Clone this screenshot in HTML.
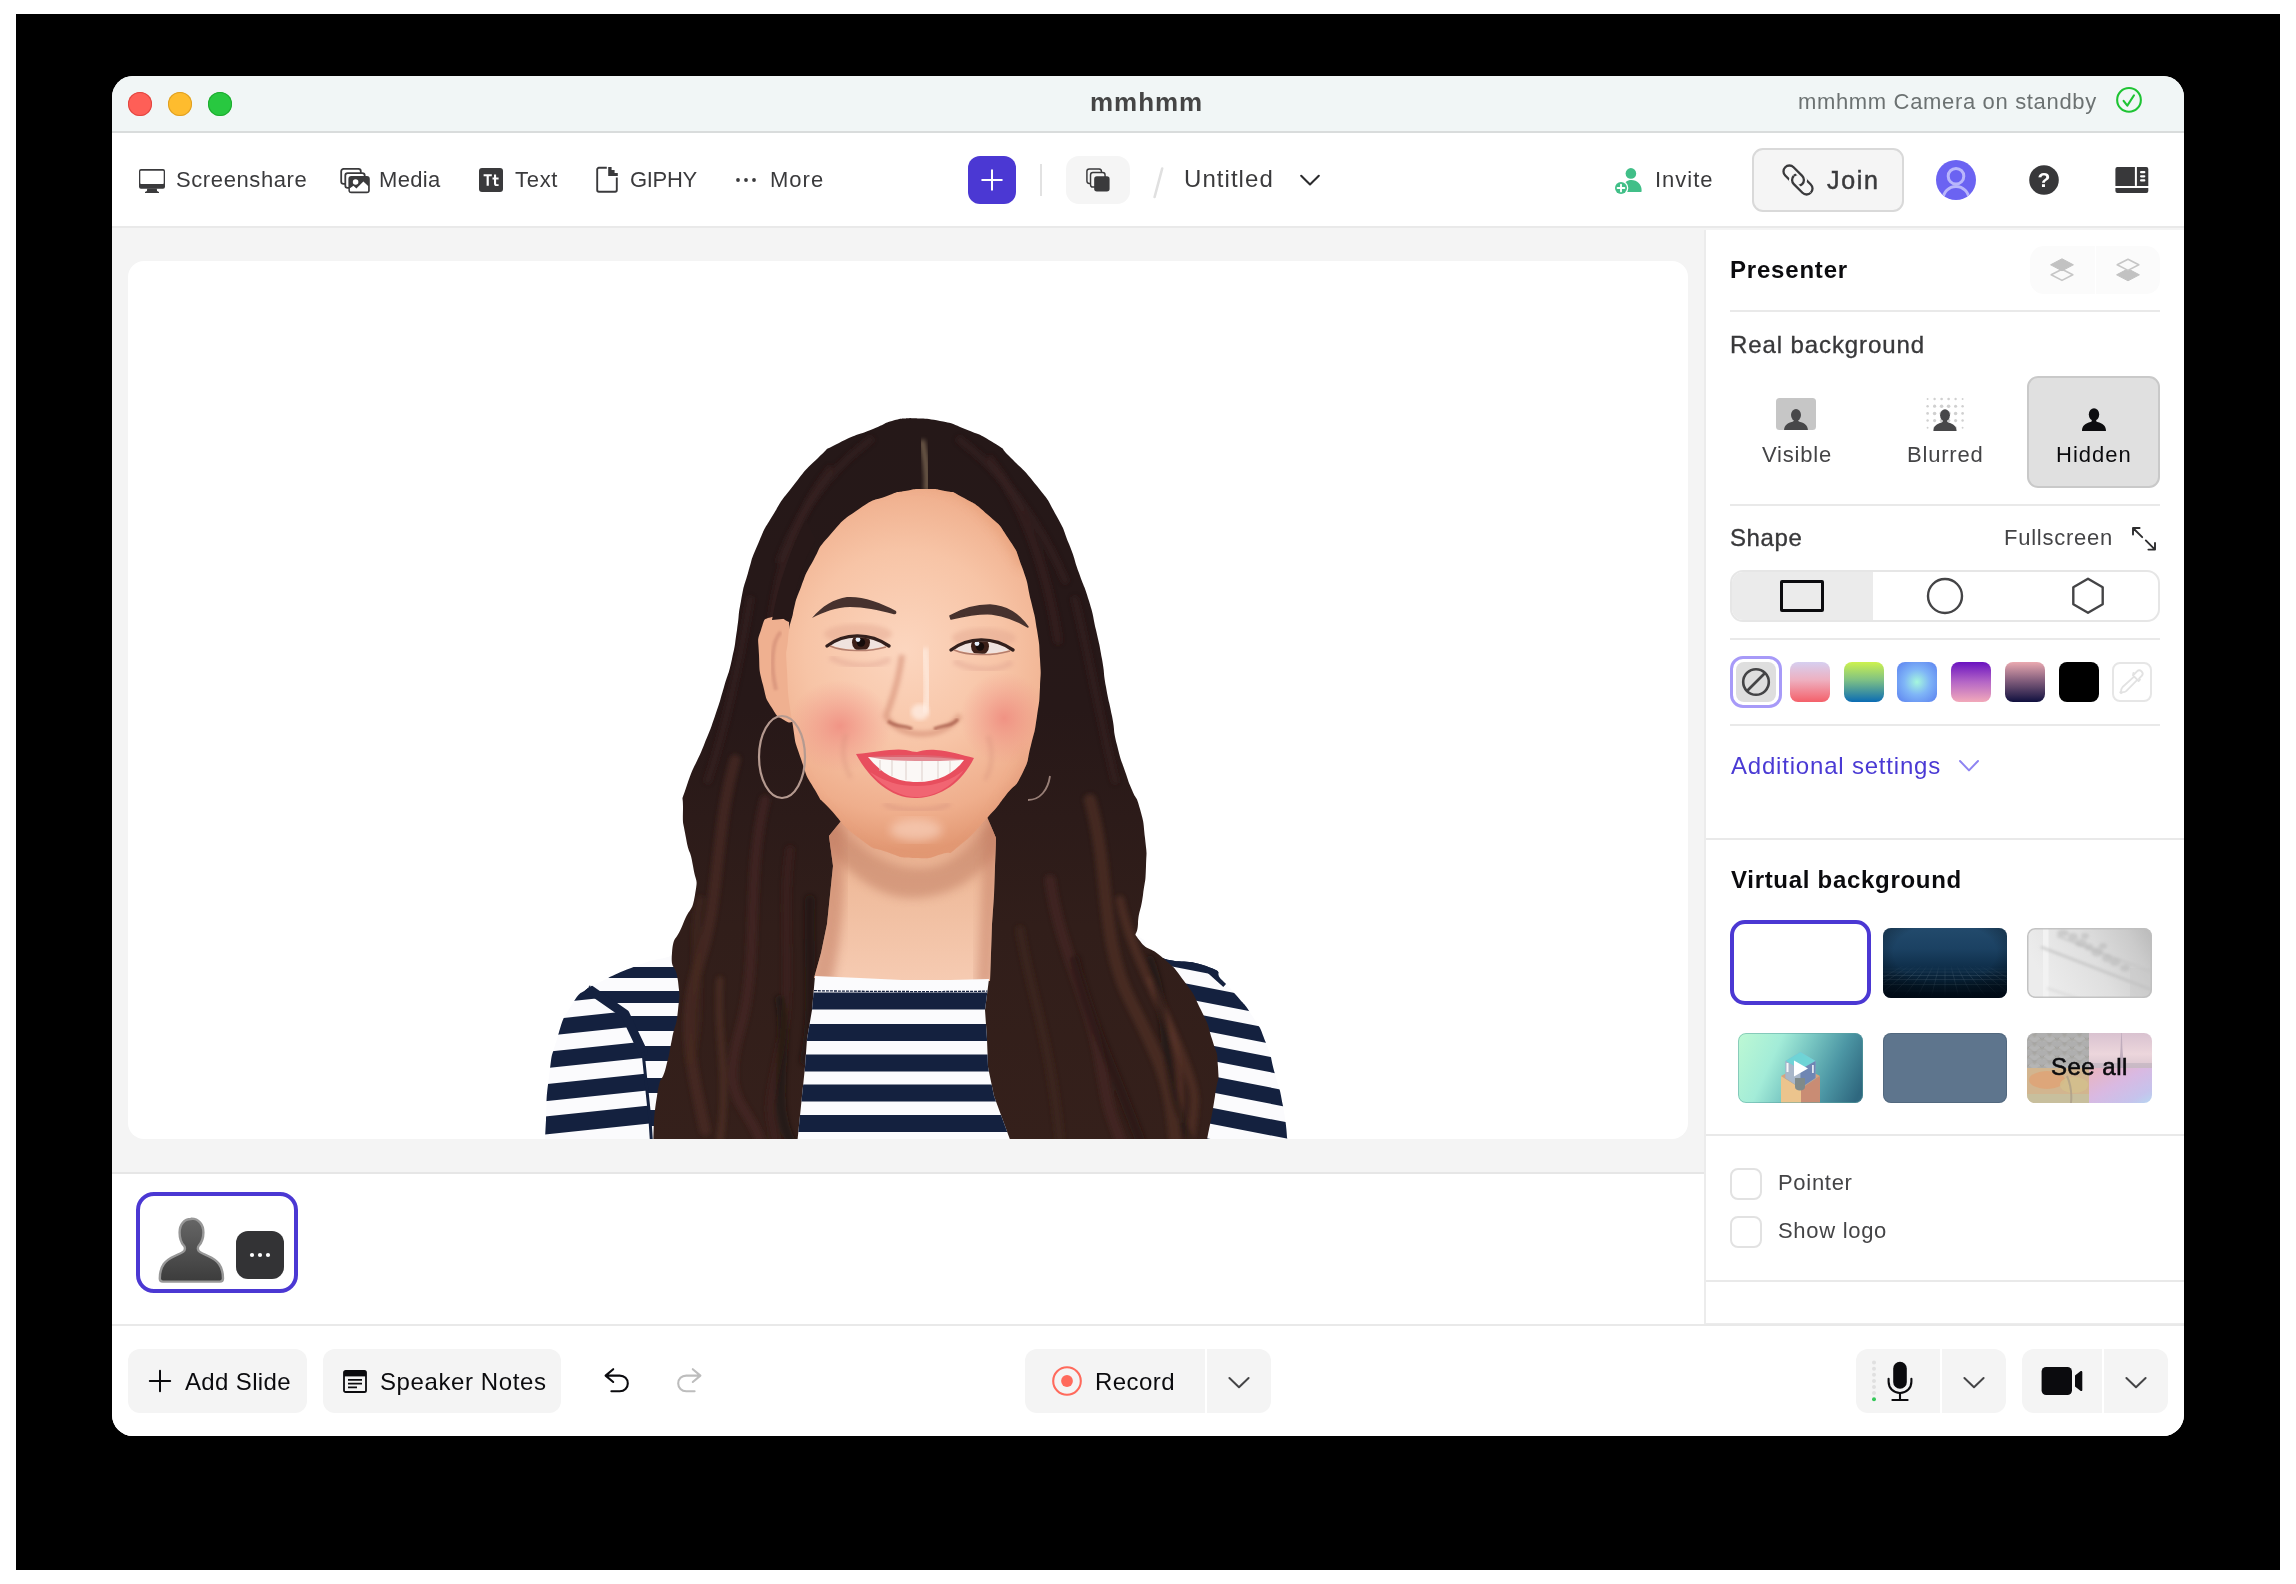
<!DOCTYPE html>
<html><head><meta charset="utf-8"><title>mmhmm</title>
<style>
*{box-sizing:border-box;margin:0;padding:0}
html,body{width:2296px;height:1584px;background:#fff;overflow:hidden}
body{font-family:"Liberation Sans",sans-serif;color:#3a3a3c;position:relative}
.abs{position:absolute}
#desk{position:absolute;left:16px;top:14px;width:2264px;height:1556px;background:#000}
#win{position:absolute;left:112px;top:76px;width:2072px;height:1360px;border-radius:21px;background:#fff;overflow:hidden}
/* everything inside #win is positioned in PAGE coords via an inner shifted layer */
#in{position:absolute;left:-112px;top:-76px;width:2296px;height:1584px}
#titlebar{left:112px;top:76px;width:2072px;height:57px;background:#f1f6f6;border-bottom:2px solid #d9dcdc}
#toolbar{left:112px;top:133px;width:2072px;height:95px;background:#fff;border-bottom:2px solid #e9e9e9}
#stagebg{left:112px;top:228px;width:2072px;height:946px;background:#f4f4f4;border-bottom:2px solid #e6e6e6}
#stage{left:128px;top:261px;width:1560px;height:878px;background:#fff;border-radius:16px;overflow:hidden}
#tray{left:112px;top:1174px;width:1593px;height:151px;background:#fff}
#panel{left:1704px;top:230px;width:480px;height:1094px;background:#fff;border-left:2px solid #ececec;border-bottom:1px solid #ececec}
#bottombar{left:112px;top:1324px;width:2072px;height:112px;background:#fff;border-top:2px solid #e9e9e9}
.t{position:absolute;white-space:nowrap;line-height:1;will-change:transform;-webkit-font-smoothing:antialiased}
.hr{position:absolute;height:2px;background:#e9e9e9}
</style></head><body>
<div id="desk"></div>
<div id="win"><div id="in">
<div class="abs" id="titlebar"></div>
<div class="abs" id="toolbar"></div>
<div class="abs" id="stagebg"></div>
<div class="abs" id="stage"><!--PORTRAIT-->
<svg class="abs" style="left:0;top:0" width="1560" height="878" viewBox="128 261 1560 878">
<defs>
<linearGradient id="hg" x1="0" y1="0" x2="0" y2="1"><stop offset="0" stop-color="#251818"/><stop offset="0.4" stop-color="#271818"/><stop offset="0.7" stop-color="#311e1a"/><stop offset="1" stop-color="#35201b"/></linearGradient>
<radialGradient id="sk" gradientUnits="userSpaceOnUse" cx="905" cy="650" r="200"><stop offset="0" stop-color="#fcd6bf"/><stop offset="0.5" stop-color="#f7c4a6"/><stop offset="0.82" stop-color="#efae8c"/><stop offset="1" stop-color="#e29873"/></radialGradient>
<linearGradient id="nk" x1="0" y1="0" x2="0" y2="1"><stop offset="0" stop-color="#d9977a"/><stop offset="0.4" stop-color="#eeb999"/><stop offset="1" stop-color="#f6cbb2"/></linearGradient>
<radialGradient id="bl" cx="0.5" cy="0.5" r="0.5"><stop offset="0" stop-color="#ee8078" stop-opacity="0.7"/><stop offset="1" stop-color="#ef8d84" stop-opacity="0"/></radialGradient>
<clipPath id="shc"><path d="M700.0 936.0C693.3 941.3 701.3 942.0 680.0 952.0C658.7 962.0 664.0 955.3 636.0 966.0C608.0 976.7 612.0 976.7 596.0 984.0C580.0 991.3 596.3 980.7 588.0 988.0C579.7 995.3 581.3 989.0 571.0 1006.0C560.7 1023.0 564.3 1015.3 557.0 1039.0C549.7 1062.7 552.7 1050.0 549.0 1077.0C545.3 1104.0 547.3 1097.3 546.0 1120.0C544.7 1142.7 545.3 1136.7 545.0 1145.0L1288 1145C1286.3 1132.0 1287.3 1129.7 1283.0 1106.0C1278.7 1082.3 1280.7 1095.0 1275.0 1074.0C1269.3 1053.0 1273.3 1062.0 1266.0 1043.0C1258.7 1024.0 1263.0 1033.0 1253.0 1017.0C1243.0 1001.0 1246.3 1007.3 1236.0 995.0C1225.7 982.7 1232.0 989.7 1222.0 980.0C1212.0 970.3 1227.7 974.0 1206.0 966.0C1184.3 958.0 1178.7 965.3 1157.0 956.0C1135.3 946.7 1153.3 944.7 1141.0 938.0C1128.7 931.3 1127.0 936.7 1120.0 936.0L700 936Z"/></clipPath>
<clipPath id="csc"><path d="M815 976 L860 978 L902 980 L950 980 L989 979 L985 1010 L987 1039 L988 1067 L994 1096 L1012 1145 L797 1145 L802 1096 L805 1067 L807 1039 L812 1010Z"/></clipPath>
<clipPath id="hc"><path d="M910.0 418.0C920.0 419.0 921.7 417.3 940.0 421.0C958.3 424.7 947.0 421.7 965.0 429.0C983.0 436.3 978.7 433.3 994.0 443.0C1009.3 452.7 996.7 443.7 1011.0 458.0C1025.3 472.3 1022.0 467.0 1037.0 486.0C1052.0 505.0 1045.3 495.7 1056.0 515.0C1066.7 534.3 1061.3 524.7 1069.0 544.0C1076.7 563.3 1072.3 554.0 1079.0 573.0C1085.7 592.0 1083.3 582.0 1089.0 601.0C1094.7 620.0 1091.7 610.7 1096.0 630.0C1100.3 649.3 1098.7 640.0 1102.0 659.0C1105.3 678.0 1102.7 668.0 1106.0 687.0C1109.3 706.0 1108.3 696.7 1112.0 716.0C1115.7 735.3 1112.3 725.7 1117.0 745.0C1121.7 764.3 1121.0 759.0 1126.0 774.0C1131.0 789.0 1127.3 778.3 1132.0 790.0C1136.7 801.7 1135.7 793.0 1140.0 809.0C1144.3 825.0 1143.0 819.0 1145.0 838.0C1147.0 857.0 1146.7 847.0 1146.0 866.0C1145.3 885.0 1145.7 875.7 1143.0 895.0C1140.3 914.3 1139.0 908.7 1138.0 924.0C1137.0 939.3 1131.7 929.7 1140.0 941.0C1148.3 952.3 1148.3 944.7 1163.0 958.0C1177.7 971.3 1171.3 963.7 1184.0 981.0C1196.7 998.3 1191.7 990.7 1201.0 1010.0C1210.3 1029.3 1206.3 1020.0 1212.0 1039.0C1217.7 1058.0 1217.0 1048.0 1218.0 1067.0C1219.0 1086.0 1219.0 1070.0 1215.0 1096.0C1211.0 1122.0 1209.0 1128.7 1206.0 1145.0L653 1145C654.3 1128.7 652.7 1122.0 657.0 1096.0C661.3 1070.0 661.0 1086.0 666.0 1067.0C671.0 1048.0 668.0 1058.0 672.0 1039.0C676.0 1020.0 676.0 1029.3 678.0 1010.0C680.0 990.7 680.0 1000.0 678.0 981.0C676.0 962.0 670.3 972.0 672.0 953.0C673.7 934.0 675.3 943.3 683.0 924.0C690.7 904.7 691.7 914.3 695.0 895.0C698.3 875.7 696.0 885.0 693.0 866.0C690.0 847.0 689.3 857.0 686.0 838.0C682.7 819.0 682.7 826.7 683.0 809.0C683.3 791.3 680.0 806.3 687.0 785.0C694.0 763.7 694.7 768.0 704.0 745.0C713.3 722.0 708.3 735.3 715.0 716.0C721.7 696.7 718.3 706.0 724.0 687.0C729.7 668.0 727.7 678.0 732.0 659.0C736.3 640.0 734.0 649.3 737.0 630.0C740.0 610.7 737.3 620.0 741.0 601.0C744.7 582.0 742.3 592.0 748.0 573.0C753.7 554.0 749.7 563.3 758.0 544.0C766.3 524.7 761.3 534.3 773.0 515.0C784.7 495.7 778.0 505.0 793.0 486.0C808.0 467.0 802.7 472.3 818.0 458.0C833.3 443.7 820.7 452.7 839.0 443.0C857.3 433.3 855.3 436.3 873.0 429.0C890.7 421.7 879.7 424.7 892.0 421.0C904.3 417.3 904.0 419.0 910.0 418.0Z"/></clipPath>
<clipPath id="fc"><path d="M925.0 489.0C911.7 489.0 917.7 488.7 905.0 491.0C892.3 493.3 902.3 490.0 887.0 496.0C871.7 502.0 878.0 496.0 859.0 509.0C840.0 522.0 845.3 517.7 830.0 535.0C814.7 552.3 822.7 543.7 813.0 561.0C803.3 578.3 807.7 569.7 801.0 587.0C794.3 604.3 797.3 595.3 793.0 613.0C788.7 630.7 790.0 621.0 788.0 640.0C786.0 659.0 785.7 643.3 787.0 670.0C788.3 696.7 787.3 690.3 792.0 720.0C796.7 749.7 793.3 735.7 801.0 759.0C808.7 782.3 805.3 773.3 815.0 790.0C824.7 806.7 815.3 793.0 830.0 809.0C844.7 825.0 840.0 823.7 859.0 838.0C878.0 852.3 868.0 845.3 887.0 852.0C906.0 858.7 897.7 857.3 916.0 858.0C934.3 858.7 927.7 858.0 942.0 854.0C956.3 850.0 943.7 858.3 959.0 846.0C974.3 833.7 972.3 834.0 988.0 817.0C1003.7 800.0 994.7 809.3 1006.0 795.0C1017.3 780.7 1013.7 790.7 1022.0 774.0C1030.3 757.3 1026.0 764.3 1031.0 745.0C1036.0 725.7 1034.0 735.3 1037.0 716.0C1040.0 696.7 1039.0 706.0 1040.0 687.0C1041.0 668.0 1041.0 678.0 1040.0 659.0C1039.0 640.0 1040.0 649.3 1037.0 630.0C1034.0 610.7 1036.0 622.0 1031.0 601.0C1026.0 580.0 1029.7 588.0 1022.0 567.0C1014.3 546.0 1019.3 555.3 1008.0 538.0C996.7 520.7 1003.3 528.7 988.0 515.0C972.7 501.3 976.3 505.0 962.0 497.0C947.7 489.0 957.3 493.7 945.0 491.0C932.7 488.3 938.3 489.0 925.0 489.0Z"/></clipPath>
<filter id="b2"><feGaussianBlur stdDeviation="2"/></filter>
<filter id="b5"><feGaussianBlur stdDeviation="5"/></filter>
<filter id="b1"><feGaussianBlur stdDeviation="0.8"/></filter>
</defs>
<path d="M700.0 936.0C693.3 941.3 701.3 942.0 680.0 952.0C658.7 962.0 664.0 955.3 636.0 966.0C608.0 976.7 612.0 976.7 596.0 984.0C580.0 991.3 596.3 980.7 588.0 988.0C579.7 995.3 581.3 989.0 571.0 1006.0C560.7 1023.0 564.3 1015.3 557.0 1039.0C549.7 1062.7 552.7 1050.0 549.0 1077.0C545.3 1104.0 547.3 1097.3 546.0 1120.0C544.7 1142.7 545.3 1136.7 545.0 1145.0L1288 1145C1286.3 1132.0 1287.3 1129.7 1283.0 1106.0C1278.7 1082.3 1280.7 1095.0 1275.0 1074.0C1269.3 1053.0 1273.3 1062.0 1266.0 1043.0C1258.7 1024.0 1263.0 1033.0 1253.0 1017.0C1243.0 1001.0 1246.3 1007.3 1236.0 995.0C1225.7 982.7 1232.0 989.7 1222.0 980.0C1212.0 970.3 1227.7 974.0 1206.0 966.0C1184.3 958.0 1178.7 965.3 1157.0 956.0C1135.3 946.7 1153.3 944.7 1141.0 938.0C1128.7 931.3 1127.0 936.7 1120.0 936.0L700 936Z" fill="#fbfbfd"/>
<g clip-path="url(#shc)" fill="#14213f">
<clipPath id="lbody"><path d="M588 988L625 1014L643 1052L650 1120L652 1150L760 1150L760 930L600 930Z"/></clipPath>
<clipPath id="lslv"><path d="M500 930L588 988L625 1014L643 1052L650 1120L652 1150L500 1150Z"/></clipPath>
<g clip-path="url(#lbody)"><rect x="580" y="967" width="180" height="11"/><rect x="580" y="991" width="180" height="12"/><rect x="580" y="1016" width="180" height="15"/><rect x="580" y="1046" width="180" height="15"/><rect x="580" y="1078" width="180" height="15"/><rect x="580" y="1110" width="180" height="16"/></g>
<g clip-path="url(#lslv)"><g transform="rotate(-6 575 1060)"><rect x="480" y="986" width="220" height="15"/><rect x="480" y="1017" width="220" height="16"/><rect x="480" y="1049" width="220" height="16"/><rect x="480" y="1081" width="220" height="17"/><rect x="480" y="1113" width="220" height="18"/></g></g>
<path d="M589 989L625 1014L643 1052" stroke="#14213f" stroke-width="9" fill="none" stroke-linejoin="round" stroke-linecap="round"/>
<path d="M643 1052L650 1120L652 1150" stroke="#14213f" stroke-width="3" fill="none"/>
<g transform="rotate(11 1240 1050)"><rect x="1100" y="938" width="260" height="14"/><rect x="1100" y="967" width="260" height="14"/><rect x="1100" y="995" width="260" height="15"/><rect x="1100" y="1023" width="260" height="15"/><rect x="1100" y="1051" width="260" height="15"/><rect x="1100" y="1081" width="260" height="16"/><rect x="1100" y="1112" width="260" height="16"/><rect x="1100" y="1143" width="260" height="16"/></g>
<path d="M1150 954L1206 966L1226 984" stroke="#14213f" stroke-width="8" fill="none" stroke-linejoin="round"/>
</g>
<path d="M910.0 418.0C920.0 419.0 921.7 417.3 940.0 421.0C958.3 424.7 947.0 421.7 965.0 429.0C983.0 436.3 978.7 433.3 994.0 443.0C1009.3 452.7 996.7 443.7 1011.0 458.0C1025.3 472.3 1022.0 467.0 1037.0 486.0C1052.0 505.0 1045.3 495.7 1056.0 515.0C1066.7 534.3 1061.3 524.7 1069.0 544.0C1076.7 563.3 1072.3 554.0 1079.0 573.0C1085.7 592.0 1083.3 582.0 1089.0 601.0C1094.7 620.0 1091.7 610.7 1096.0 630.0C1100.3 649.3 1098.7 640.0 1102.0 659.0C1105.3 678.0 1102.7 668.0 1106.0 687.0C1109.3 706.0 1108.3 696.7 1112.0 716.0C1115.7 735.3 1112.3 725.7 1117.0 745.0C1121.7 764.3 1121.0 759.0 1126.0 774.0C1131.0 789.0 1127.3 778.3 1132.0 790.0C1136.7 801.7 1135.7 793.0 1140.0 809.0C1144.3 825.0 1143.0 819.0 1145.0 838.0C1147.0 857.0 1146.7 847.0 1146.0 866.0C1145.3 885.0 1145.7 875.7 1143.0 895.0C1140.3 914.3 1139.0 908.7 1138.0 924.0C1137.0 939.3 1131.7 929.7 1140.0 941.0C1148.3 952.3 1148.3 944.7 1163.0 958.0C1177.7 971.3 1171.3 963.7 1184.0 981.0C1196.7 998.3 1191.7 990.7 1201.0 1010.0C1210.3 1029.3 1206.3 1020.0 1212.0 1039.0C1217.7 1058.0 1217.0 1048.0 1218.0 1067.0C1219.0 1086.0 1219.0 1070.0 1215.0 1096.0C1211.0 1122.0 1209.0 1128.7 1206.0 1145.0L653 1145C654.3 1128.7 652.7 1122.0 657.0 1096.0C661.3 1070.0 661.0 1086.0 666.0 1067.0C671.0 1048.0 668.0 1058.0 672.0 1039.0C676.0 1020.0 676.0 1029.3 678.0 1010.0C680.0 990.7 680.0 1000.0 678.0 981.0C676.0 962.0 670.3 972.0 672.0 953.0C673.7 934.0 675.3 943.3 683.0 924.0C690.7 904.7 691.7 914.3 695.0 895.0C698.3 875.7 696.0 885.0 693.0 866.0C690.0 847.0 689.3 857.0 686.0 838.0C682.7 819.0 682.7 826.7 683.0 809.0C683.3 791.3 680.0 806.3 687.0 785.0C694.0 763.7 694.7 768.0 704.0 745.0C713.3 722.0 708.3 735.3 715.0 716.0C721.7 696.7 718.3 706.0 724.0 687.0C729.7 668.0 727.7 678.0 732.0 659.0C736.3 640.0 734.0 649.3 737.0 630.0C740.0 610.7 737.3 620.0 741.0 601.0C744.7 582.0 742.3 592.0 748.0 573.0C753.7 554.0 749.7 563.3 758.0 544.0C766.3 524.7 761.3 534.3 773.0 515.0C784.7 495.7 778.0 505.0 793.0 486.0C808.0 467.0 802.7 472.3 818.0 458.0C833.3 443.7 820.7 452.7 839.0 443.0C857.3 433.3 855.3 436.3 873.0 429.0C890.7 421.7 879.7 424.7 892.0 421.0C904.3 417.3 904.0 419.0 910.0 418.0Z" fill="url(#hg)"/>
<g clip-path="url(#hc)" fill="none" stroke-linecap="round" filter="url(#b2)">
<path d="M735 760C715 830 720 900 700 960S690 1060 705 1130" stroke="#4f2f27" stroke-width="11" opacity="0.6"/>
<path d="M765 800C745 880 760 960 740 1030S745 1100 760 1140" stroke="#4a2b24" stroke-width="10" opacity="0.55"/>
<path d="M700 900C690 950 705 1000 690 1060" stroke="#452820" stroke-width="9" opacity="0.55"/>
<path d="M790 850C780 920 795 980 780 1050S770 1110 775 1140" stroke="#3f2520" stroke-width="9" opacity="0.5"/>
<path d="M720 980C715 1030 730 1070 720 1140" stroke="#5a3529" stroke-width="7" opacity="0.5"/>
<path d="M810 900C808 960 815 1010 805 1060" stroke="#22140f" stroke-width="10" opacity="0.6"/>
<path d="M1090 800C1110 870 1100 940 1130 1000S1170 1080 1175 1140" stroke="#56332a" stroke-width="12" opacity="0.6"/>
<path d="M1050 880C1060 950 1090 1000 1100 1060S1110 1110 1120 1140" stroke="#4a2b24" stroke-width="11" opacity="0.55"/>
<path d="M1120 900C1130 950 1160 1000 1180 1050S1195 1100 1190 1140" stroke="#5c372b" stroke-width="9" opacity="0.55"/>
<path d="M1020 930C1030 990 1050 1040 1060 1140" stroke="#432720" stroke-width="9" opacity="0.5"/>
<path d="M1150 980C1170 1020 1185 1060 1180 1120" stroke="#623a2c" stroke-width="7" opacity="0.5"/>
<path d="M1075 960C1085 1010 1110 1060 1140 1140" stroke="#24150f" stroke-width="10" opacity="0.55"/>
<path d="M830 470C800 510 780 560 772 620" stroke="#3b2624" stroke-width="9" opacity="0.5"/>
<path d="M870 440C830 470 800 510 780 560" stroke="#392423" stroke-width="8" opacity="0.45"/>
<path d="M990 460C1020 500 1045 560 1058 640" stroke="#3b2624" stroke-width="9" opacity="0.5"/>
<path d="M960 440C1000 470 1040 520 1065 580" stroke="#392423" stroke-width="8" opacity="0.45"/>
<path d="M1075 600C1090 660 1100 720 1115 780" stroke="#3a2422" stroke-width="8" opacity="0.45"/>
<path d="M750 600C740 660 728 720 708 780" stroke="#3a2422" stroke-width="8" opacity="0.45"/>
<path d="M780 1000C790 1050 770 1100 790 1140" stroke="#1c1110" stroke-width="10" opacity="0.5"/>
<path d="M1150 960C1170 1010 1160 1080 1190 1140" stroke="#1c1110" stroke-width="9" opacity="0.45"/>
</g>
<path d="M922 440C925 456 928 472 927 491" stroke="#8d775f" stroke-width="6" fill="none" opacity="0.7" filter="url(#b2)"/>
<path d="M845 816 L829 836 L833 866 L830 895 L827 924 L821 953 L814 978 L860 981 L902 982 L950 982 L990 981 L991 953 L992 924 L994 895 L995 866 L996 838 L985 812 L916 800Z" fill="url(#nk)"/>
<clipPath id="nkc"><path d="M845 816 L829 836 L833 866 L830 895 L827 924 L821 953 L814 978 L860 981 L902 982 L950 982 L990 981 L991 953 L992 924 L994 895 L995 866 L996 838 L985 812 L916 800Z"/></clipPath>
<g clip-path="url(#nkc)"><path d="M815 790C840 840 880 866 916 868S980 842 1010 790L1010 830C985 880 950 896 916 898S846 876 815 830Z" fill="#c58469" opacity="0.6" filter="url(#b5)"/><path d="M815 800C828 860 826 920 808 985L832 985C844 930 846 880 842 830Z" fill="#c27d64" opacity="0.55" filter="url(#b5)"/><path d="M1006 800C998 860 996 920 994 985L976 985C980 930 982 880 984 830Z" fill="#c27d64" opacity="0.5" filter="url(#b5)"/></g>
<path d="M815 976 L860 978 L902 980 L950 980 L989 979 L985 1010 L987 1039 L988 1067 L994 1096 L1012 1145 L797 1145 L802 1096 L805 1067 L807 1039 L812 1010Z" fill="#fbfbfd"/>
<g clip-path="url(#csc)" fill="#14213f"><rect x="780" y="992.5" width="250" height="17"/><rect x="780" y="1024" width="250" height="17"/><rect x="780" y="1054.5" width="250" height="17"/><rect x="780" y="1084.5" width="250" height="17"/><rect x="780" y="1115" width="250" height="17"/><path d="M806 990.500C850 991.500 950 992 998 991" stroke="#14213f" stroke-width="1.300" fill="none" stroke-dasharray="3 1"/></g>
<path d="M789.0 622.0C783.3 620.3 781.3 614.3 772.0 617.0C762.7 619.7 765.3 617.3 761.0 630.0C756.7 642.7 758.3 636.7 759.0 655.0C759.7 673.3 758.7 667.3 763.0 685.0C767.3 702.7 765.0 696.3 772.0 708.0C779.0 719.7 777.0 715.3 784.0 720.0C791.0 724.7 790.0 721.3 793.0 722.0Z" fill="#efb090"/>
<path d="M781 632C772 640 770 665 776 690" stroke="#d48f78" stroke-width="4" fill="none" opacity="0.7" filter="url(#b1)"/>
<path d="M925.0 489.0C911.7 489.0 917.7 488.7 905.0 491.0C892.3 493.3 902.3 490.0 887.0 496.0C871.7 502.0 878.0 496.0 859.0 509.0C840.0 522.0 845.3 517.7 830.0 535.0C814.7 552.3 822.7 543.7 813.0 561.0C803.3 578.3 807.7 569.7 801.0 587.0C794.3 604.3 797.3 595.3 793.0 613.0C788.7 630.7 790.0 621.0 788.0 640.0C786.0 659.0 785.7 643.3 787.0 670.0C788.3 696.7 787.3 690.3 792.0 720.0C796.7 749.7 793.3 735.7 801.0 759.0C808.7 782.3 805.3 773.3 815.0 790.0C824.7 806.7 815.3 793.0 830.0 809.0C844.7 825.0 840.0 823.7 859.0 838.0C878.0 852.3 868.0 845.3 887.0 852.0C906.0 858.7 897.7 857.3 916.0 858.0C934.3 858.7 927.7 858.0 942.0 854.0C956.3 850.0 943.7 858.3 959.0 846.0C974.3 833.7 972.3 834.0 988.0 817.0C1003.7 800.0 994.7 809.3 1006.0 795.0C1017.3 780.7 1013.7 790.7 1022.0 774.0C1030.3 757.3 1026.0 764.3 1031.0 745.0C1036.0 725.7 1034.0 735.3 1037.0 716.0C1040.0 696.7 1039.0 706.0 1040.0 687.0C1041.0 668.0 1041.0 678.0 1040.0 659.0C1039.0 640.0 1040.0 649.3 1037.0 630.0C1034.0 610.7 1036.0 622.0 1031.0 601.0C1026.0 580.0 1029.7 588.0 1022.0 567.0C1014.3 546.0 1019.3 555.3 1008.0 538.0C996.7 520.7 1003.3 528.7 988.0 515.0C972.7 501.3 976.3 505.0 962.0 497.0C947.7 489.0 957.3 493.7 945.0 491.0C932.7 488.3 938.3 489.0 925.0 489.0Z" fill="url(#sk)"/>
<g clip-path="url(#fc)">
<path d="M800 560C830 510 870 488 910 486S985 505 1020 570L1060 540L1000 450L820 450L760 560Z" fill="#e3986f" opacity="0.45" filter="url(#b5)"/>
<ellipse cx="840" cy="726" rx="52" ry="46" fill="url(#bl)"/><ellipse cx="1004" cy="718" rx="44" ry="46" fill="url(#bl)"/>
<path d="M800 770C830 830 880 860 918 862S990 830 1025 750L1060 780L960 900L860 900L780 800Z" fill="#e29a7c" opacity="0.4" filter="url(#b5)"/>
</g>
<path d="M812 618C822 606 834 599 847 597C862 596 880 602 896 611C897 613 896 615 893 614C878 610 864 607 850 607C836 607 824 612 812 618Z" fill="#47322e"/>
<path d="M950 616C962 609 976 605 990 605C1006 606 1019 614 1028 627C1018 621 1006 616 992 614C978 613 964 616 951 619Z" fill="#47322e" stroke="#47322e" stroke-width="1.500" stroke-linejoin="round"/>
<ellipse cx="858" cy="634" rx="34" ry="10" fill="#e2a68f" opacity="0.45" filter="url(#b2)"/><ellipse cx="984" cy="638" rx="32" ry="10" fill="#e2a68f" opacity="0.45" filter="url(#b2)"/>
<path d="M830.0 645C844.0 635 869.2 634 886.0 646C869.2 651 844.0 651 830.0 645Z" fill="#efe2de"/><clipPath id="ec858"><path d="M830.0 645C844.0 635 869.2 634 886.0 646C869.2 651 844.0 651 830.0 645Z"/></clipPath><g clip-path="url(#ec858)"><circle cx="861" cy="642.5" r="9" fill="#3c2019"/><circle cx="861" cy="642.5" r="4.200" fill="#150c0b"/><circle cx="858" cy="639.5" r="2.400" fill="#e4eefb"/></g><path d="M827.0 646C844.0 633 869.2 632 889.0 646" fill="none" stroke="#33201d" stroke-width="3.400" stroke-linecap="round"/><path d="M830.0 646C844.0 652 869.2 652 886.0 647" fill="none" stroke="#a46c5c" stroke-width="1.400" opacity="0.8"/>
<path d="M954.0 649C968.0 639 993.2 638 1010.0 650C993.2 655 968.0 655 954.0 649Z" fill="#efe2de"/><clipPath id="ec982"><path d="M954.0 649C968.0 639 993.2 638 1010.0 650C993.2 655 968.0 655 954.0 649Z"/></clipPath><g clip-path="url(#ec982)"><circle cx="980" cy="646.5" r="9" fill="#3c2019"/><circle cx="980" cy="646.5" r="4.200" fill="#150c0b"/><circle cx="977" cy="643.5" r="2.400" fill="#e4eefb"/></g><path d="M951.0 650C968.0 637 993.2 636 1013.0 650" fill="none" stroke="#33201d" stroke-width="3.400" stroke-linecap="round"/><path d="M954.0 650C968.0 656 993.2 656 1010.0 651" fill="none" stroke="#a46c5c" stroke-width="1.400" opacity="0.8"/>
<path d="M830 657C850 668 874 668 890 659" stroke="#d9998a" stroke-width="6" fill="none" opacity="0.35" filter="url(#b2)"/>
<path d="M954 661C974 672 998 672 1012 662" stroke="#d9998a" stroke-width="6" fill="none" opacity="0.35" filter="url(#b2)"/>
<path d="M902 655C898 688 890 704 886 716C892 728 908 734 922 734S952 728 960 715" fill="none" stroke="#d48d75" stroke-width="6" opacity="0.6" filter="url(#b2)"/>
<path d="M888 721C896 728 906 725 912 729M934 729C942 725 952 727 958 719" stroke="#a55a48" stroke-width="3.400" fill="none" opacity="0.75" filter="url(#b1)"/>
<path d="M924 648C928 680 930 700 924 712" stroke="#fee9dc" stroke-width="9" fill="none" opacity="0.8" filter="url(#b2)"/>
<ellipse cx="920" cy="712" rx="9" ry="8" fill="#fff1e8" opacity="0.7" filter="url(#b2)"/>
<path d="M856 754C876 752 894 748 906 750C911 751 914 752 917 752C921 751 927 749 936 750C950 751 962 755 974 758C962 782 942 797 917 798S870 780 856 754Z" fill="#e84e5e"/>
<path d="M868 757C884 757 900 757 916 757S950 758 964 760C954 774 938 782 917 782S882 774 868 757Z" fill="#fbf8f6"/>
<path d="M869 757C885 760 900 761 916 761S948 761 963 760C950 756 930 755 916 755S884 755 869 757Z" fill="#d96a74" opacity="0.75"/>
<path d="M880 760v11M892 760v16M906 761v19M922 761v20M938 761v18M950 761v12" stroke="#dccfc9" stroke-width="1.100" opacity="0.9"/>
<path d="M870 772C886 790 902 797 917 797S950 789 964 770C952 780 936 786 917 786S886 782 870 772Z" fill="#f26874" opacity="0.9"/>
<path d="M846 734C841 750 844 766 851 778M988 736C994 752 992 768 985 780" stroke="#d18c78" stroke-width="4" fill="none" opacity="0.35" filter="url(#b2)"/>
<path d="M884 804C900 812 934 812 950 804" stroke="#d99580" stroke-width="5" fill="none" opacity="0.5" filter="url(#b2)"/>
<ellipse cx="916" cy="830" rx="26" ry="11" fill="#fde0d0" opacity="0.5" filter="url(#b5)"/>
<path d="M806 520C790 550 778 585 772 620L792 618C794 590 802 562 816 540Z" fill="#271818"/>
<ellipse cx="782" cy="757" rx="23" ry="41" fill="none" stroke="#b59a90" stroke-width="2.200"/>
<path d="M1028 800C1040 800 1048 790 1050 776" stroke="#b59a90" stroke-width="1.800" fill="none" opacity="0.8"/>
</svg>
<!--/PORTRAIT--></div>
<div class="abs" id="tray"></div>
<div class="abs" id="panel"></div>
<div class="abs" id="bottombar"></div>
<!--TITLE-->
<div class="abs" style="left:128px;top:92px;width:24px;height:24px;border-radius:50%;background:#fe5f57;box-shadow:inset 0 0 0 1px #e14640"></div>
<div class="abs" style="left:168px;top:92px;width:24px;height:24px;border-radius:50%;background:#febc2e;box-shadow:inset 0 0 0 1px #dfa023"></div>
<div class="abs" style="left:208px;top:92px;width:24px;height:24px;border-radius:50%;background:#28c840;box-shadow:inset 0 0 0 1px #1eab2f"></div>
<div class="t" id="ttl" style="left:1090px;top:89px;font-size:26px;font-weight:bold;color:#454545;letter-spacing:0.95px">mmhmm</div>
<div class="t" id="standby" style="left:1798px;top:91px;font-size:22px;color:#6c7272;letter-spacing:0.66px">mmhmm Camera on standby</div>
<svg class="abs" style="left:2115px;top:87px" width="28" height="28" viewBox="0 0 28 28"><circle cx="14" cy="12.900" r="11.850" fill="none" stroke="#1fc434" stroke-width="2.100"/><path d="M8.600 13.800L12.300 18.600L19 8.300" fill="none" stroke="#1fc434" stroke-width="2.100" stroke-linecap="round" stroke-linejoin="round"/></svg>

<!--/TITLE-->
<!--TOOLBAR-->
<!-- screenshare -->
<svg class="abs" style="left:138px;top:168px" width="28" height="26" viewBox="0 0 28 26"><path d="M3 1.100h22a2 2 0 0 1 2 2v15.700a2 2 0 0 1-2 2H3a2 2 0 0 1-2-2V3.100a2 2 0 0 1 2-2z" fill="#3a3a3c"/><rect x="2.300" y="2.800" width="23.400" height="13.300" rx="0.800" fill="#fff"/><path d="M9.200 20.600h9.600l.3 2.300 1.900 1.100v.9H7v-.9l1.900-1.100z" fill="#3a3a3c"/></svg>
<div class="t" id="tb1" style="left:176px;top:169px;font-size:22px;letter-spacing:0.6px">Screenshare</div>
<!-- media -->
<svg class="abs" style="left:339px;top:167px" width="33" height="28" viewBox="0 0 33 28"><rect x="2.200" y="1.900" width="19.600" height="14.900" rx="2.400" fill="#fff" stroke="#3a3a3c" stroke-width="1.800"/><rect x="6.300" y="6.100" width="19.400" height="14.800" rx="2.400" fill="#fff" stroke="#3a3a3c" stroke-width="1.800"/><rect x="9.400" y="9" width="21.400" height="17.300" rx="3" fill="#3a3a3c"/><circle cx="16.600" cy="15" r="2.800" fill="#fff"/><path d="M10.900 21.300l3.500-2.600 3 2.900 7-7 4.700 4.500v4.300a1.200 1.200 0 0 1-1.200 1.200h-15.800a1.200 1.200 0 0 1-1.200-1.200z" fill="#fff"/></svg>
<div class="t" id="tb2" style="left:379px;top:169px;font-size:22px;letter-spacing:0.3px">Media</div>
<!-- text -->
<svg class="abs" style="left:479px;top:168px" width="24" height="24" viewBox="0 0 24 24"><rect x="0" y="0" width="24" height="24" rx="3" fill="#3a3a3c"/><path d="M4.600 6.200h8.200v2h-3v9.600h-2.200v-9.600h-3zM15 6.600h2.100v3h2.500v1.800h-2.500v3.900c0 .7.300 1 1 1h1.500v1.800h-2c-1.800 0-2.600-.9-2.600-2.600v-4.100h-1.500v-1.800h1.500z" fill="#fff"/></svg>
<div class="t" id="tb3" style="left:515px;top:169px;font-size:22px;letter-spacing:0.7px">Text</div>
<!-- giphy -->
<svg class="abs" style="left:595px;top:166px" width="24" height="28" viewBox="0 0 24 28"><path d="M11.800 1.800H3.900a1.700 1.700 0 0 0-1.700 1.700v20.600a1.700 1.700 0 0 0 1.700 1.700h16.200a1.700 1.700 0 0 0 1.700-1.700V11.600" fill="none" stroke="#3a3a3c" stroke-width="1.900"/><path d="M13.200 0.900h3.400v3h3v3h3.200v3h-9.600z" fill="#3a3a3c"/></svg>
<div class="t" id="tb4" style="left:630px;top:169px;font-size:22px;letter-spacing:-0.3px">GIPHY</div>
<!-- more -->
<svg class="abs" style="left:734px;top:176px" width="24" height="8" viewBox="0 0 24 8"><circle cx="4" cy="4" r="1.900" fill="#3a3a3c"/><circle cx="12" cy="4" r="1.900" fill="#3a3a3c"/><circle cx="20" cy="4" r="1.900" fill="#3a3a3c"/></svg>
<div class="t" id="tb5" style="left:770px;top:169px;font-size:22px;letter-spacing:1px">More</div>
<!-- plus -->
<div class="abs" style="left:968px;top:156px;width:48px;height:48px;border-radius:12px;background:#4b38d3"></div>
<svg class="abs" style="left:980px;top:168px" width="24" height="24" viewBox="0 0 24 24"><path d="M12 2.200v19.600M2.200 12h19.600" stroke="#fff" stroke-width="2" stroke-linecap="round"/></svg>
<div class="abs" style="left:1040px;top:164px;width:2px;height:32px;background:#e2e2e2"></div>
<!-- slides -->
<div class="abs" style="left:1066px;top:156px;width:64px;height:48px;border-radius:13px;background:#f5f5f5"></div>
<svg class="abs" style="left:1086px;top:168px" width="24.500" height="24.500" viewBox="0 0 27 27"><rect x="1" y="1" width="16" height="16" rx="2.600" fill="#f5f5f5" stroke="#3a3a3c" stroke-width="1.600"/><rect x="5" y="5" width="16" height="16" rx="2.600" fill="#f5f5f5" stroke="#3a3a3c" stroke-width="1.600"/><rect x="9" y="9" width="17" height="17" rx="3" fill="#3a3a3c"/></svg>
<svg class="abs" style="left:1150px;top:166px" width="16" height="34" viewBox="0 0 16 34"><path d="M12.200 2.500L4.600 31" stroke="#e0e0e0" stroke-width="2.600" stroke-linecap="round"/></svg>
<div class="t" id="tb6" style="left:1184px;top:167px;font-size:24px;letter-spacing:1.05px">Untitled</div>
<svg class="abs" style="left:1299px;top:173px" width="22" height="14" viewBox="0 0 22 14"><path d="M2.200 2.800L11 11.400L19.800 2.800" fill="none" stroke="#2b2b2d" stroke-width="2.100" stroke-linecap="round" stroke-linejoin="round"/></svg>
<!-- invite -->
<svg class="abs" style="left:1614px;top:167px" width="29" height="29" viewBox="0 0 29 29"><circle cx="16.900" cy="6.400" r="5.300" fill="#41bf88"/><path d="M10 24.900V20C10 15.500 13 13.100 17.300 13.100C23.300 13.100 27.600 17.700 27.600 23.200V24.200a.7.700 0 0 1-.7.700z" fill="#41bf88"/><circle cx="7" cy="21" r="7.300" fill="#fff"/><circle cx="7" cy="21" r="6" fill="#41bf88"/><path d="M7 17.600v6.800M3.600 21h6.800" stroke="#fff" stroke-width="1.900" stroke-linecap="round"/></svg>
<div class="t" id="tb7" style="left:1655px;top:169px;font-size:22px;letter-spacing:1px">Invite</div>
<!-- join -->
<div class="abs" style="left:1752px;top:148px;width:152px;height:64px;border-radius:11px;background:#f5f5f5;border:2px solid #d9d9d9"></div>
<svg class="abs" style="left:1780px;top:162px" width="36" height="36" viewBox="0 0 36 36"><defs><clipPath id="lkur"><path d="M0 0H36V36Z"/></clipPath><clipPath id="lkll"><path d="M0 0V36H36Z"/></clipPath></defs><g fill="none" stroke-linecap="round"><g clip-path="url(#lkur)" stroke="#3a3a3c" stroke-width="2.300"><rect x="-5.900" y="-12" width="11.800" height="24" rx="5.900" transform="translate(22.300 22.300) rotate(-45)"/></g><g clip-path="url(#lkur)" stroke="#f5f5f5" stroke-width="6.300"><rect x="-5.900" y="-12" width="11.800" height="24" rx="5.900" transform="translate(13.700 13.700) rotate(-45)"/></g><g stroke="#3a3a3c" stroke-width="2.300"><rect x="-5.900" y="-12" width="11.800" height="24" rx="5.900" transform="translate(13.700 13.700) rotate(-45)"/></g><g clip-path="url(#lkll)" stroke="#f5f5f5" stroke-width="6.300"><rect x="-5.900" y="-12" width="11.800" height="24" rx="5.900" transform="translate(22.300 22.300) rotate(-45)"/></g><g clip-path="url(#lkll)" stroke="#3a3a3c" stroke-width="2.300"><rect x="-5.900" y="-12" width="11.800" height="24" rx="5.900" transform="translate(22.300 22.300) rotate(-45)"/></g></g></svg>
<div class="t" id="tb8" style="left:1827px;top:167.500px;font-size:25px;letter-spacing:1.700px;color:#3a3a3c;-webkit-text-stroke:0.5px #3a3a3c">Join</div>
<!-- avatar -->
<svg class="abs" style="left:1936px;top:160px" width="40" height="40" viewBox="0 0 40 40"><defs><clipPath id="avc"><circle cx="20" cy="20" r="20"/></clipPath></defs><circle cx="20" cy="20" r="20" fill="#6b63f2"/><g clip-path="url(#avc)" fill="none" stroke="#b9b6fb" stroke-width="3"><circle cx="20" cy="16.200" r="7.800"/><circle cx="20" cy="39.400" r="13"/></g></svg>
<!-- help -->
<svg class="abs" style="left:2028px;top:164px;will-change:transform" width="32" height="32" viewBox="0 0 32 32"><circle cx="16" cy="16" r="14.800" fill="#38383a"/><text x="16" y="23.400" font-family="Liberation Sans" font-weight="bold" font-size="21" fill="#fff" text-anchor="middle">?</text></svg>
<!-- sidebar -->
<svg class="abs" style="left:2114px;top:166px" width="36" height="28" viewBox="0 0 36 28"><path d="M3.400 0.900h28.900a2 2 0 0 1 2 2v17h-32.900v-17a2 2 0 0 1 2-2z" fill="#38383a"/><rect x="20.900" y="0.900" width="2" height="19" fill="#fff"/><g fill="#fff"><rect x="26" y="5.100" width="5.400" height="2.200" rx="1.100"/><rect x="26" y="9.200" width="5.400" height="2.200" rx="1.100"/><rect x="26" y="13.300" width="5.400" height="2.200" rx="1.100"/></g><path d="M1.400 22.100h32.900v2.900a2 2 0 0 1-2 2h-28.900a2 2 0 0 1-2-2z" fill="#38383a"/></svg>
<!--/TOOLBAR-->
<!--PANEL-->
<div class="t" id="p1" style="left:1730px;top:258px;font-size:24px;font-weight:bold;color:#0b0b0e;letter-spacing:0.8px">Presenter</div>
<!-- layer buttons -->
<div class="abs" style="left:2030px;top:246px;width:64.500px;height:48px;border-radius:14px 0 0 14px;background:#fbfbfb"></div>
<div class="abs" style="left:2095.500px;top:246px;width:64.500px;height:48px;border-radius:0 14px 14px 0;background:#fbfbfb"></div>
<svg class="abs" style="left:2048px;top:256px" width="28" height="28" viewBox="0 0 28 28"><path d="M14 13.200l10.800 5.600-10.800 5.600-10.800-5.600z" fill="#fafafa" stroke="#c6c6c6" stroke-width="1.600" stroke-linejoin="round"/><path d="M14 2.800l11.400 6-11.400 6-11.400-6z" fill="#c2c2c2" stroke="#c2c2c2" stroke-width="1" stroke-linejoin="round"/></svg>
<svg class="abs" style="left:2114px;top:256px" width="28" height="28" viewBox="0 0 28 28"><path d="M14 12.800l11.400 6-11.400 6-11.400-6z" fill="#c2c2c2" stroke="#c2c2c2" stroke-width="1" stroke-linejoin="round"/><path d="M14 3.200l10.800 5.600-10.800 5.600-10.800-5.600z" fill="#fafafa" stroke="#c6c6c6" stroke-width="1.600" stroke-linejoin="round"/></svg>
<div class="hr" style="left:1730px;top:310px;width:430px"></div>
<div class="t" id="p2" style="left:1730px;top:333px;font-size:24px;color:#38383a;letter-spacing:0.9px;-webkit-text-stroke:0.35px #38383a">Real background</div>
<!-- visible -->
<svg class="abs" style="left:1776px;top:398px" width="40" height="32" viewBox="0 0 40 32"><defs><clipPath id="vc"><rect width="40" height="32" rx="3.500"/></clipPath></defs><rect width="40" height="32" rx="3.500" fill="#c6c6c6"/><g clip-path="url(#vc)" fill="#474749"><ellipse cx="20" cy="17" rx="5" ry="6"/><path d="M8 33c0-5.500 3.500-8 8.500-9.200 1.200-.3 1.500-1.200 1.300-2.800h4.400c-.2 1.600.1 2.500 1.300 2.800 5 1.200 8.500 3.700 8.500 9.200z"/></g></svg>
<div class="t" id="p3" style="left:1762px;top:444px;font-size:22px;color:#444446;letter-spacing:0.8px">Visible</div>
<!-- blurred -->
<svg class="abs" style="left:1925px;top:396px" width="40" height="35" viewBox="0 0 40 35"><g fill="#d0d0d0"><circle cx="2.6" cy="3" r="0.95"/><circle cx="9.6" cy="3" r="1.19"/><circle cx="16.6" cy="3" r="1.33"/><circle cx="23.6" cy="3" r="1.33"/><circle cx="30.6" cy="3" r="1.18"/><circle cx="37.6" cy="3" r="0.95"/><circle cx="2.6" cy="10.2" r="1.24"/><circle cx="9.6" cy="10.2" r="1.58"/><circle cx="16.6" cy="10.2" r="1.81"/><circle cx="23.6" cy="10.2" r="1.81"/><circle cx="30.6" cy="10.2" r="1.57"/><circle cx="37.6" cy="10.2" r="1.23"/><circle cx="2.6" cy="17.4" r="1.36"/><circle cx="9.6" cy="17.4" r="1.76"/><circle cx="16.6" cy="17.4" r="2.16"/><circle cx="23.6" cy="17.4" r="2.15"/><circle cx="30.6" cy="17.4" r="1.75"/><circle cx="37.6" cy="17.4" r="1.35"/><circle cx="2.6" cy="24.6" r="1.24"/><circle cx="9.6" cy="24.6" r="1.58"/><circle cx="16.6" cy="24.6" r="1.81"/><circle cx="23.6" cy="24.6" r="1.81"/><circle cx="30.6" cy="24.6" r="1.57"/><circle cx="37.6" cy="24.6" r="1.23"/><circle cx="2.6" cy="31.8" r="0.95"/><circle cx="9.6" cy="31.8" r="1.19"/><circle cx="16.6" cy="31.8" r="1.33"/><circle cx="23.6" cy="31.8" r="1.33"/><circle cx="30.6" cy="31.8" r="1.18"/><circle cx="37.6" cy="31.8" r="0.95"/></g><g fill="#474749"><ellipse cx="20" cy="19.300" rx="4.900" ry="6"/><path d="M8.400 35c0-5 3.300-7.400 8.300-8.600 1.200-.3 1.500-1.200 1.300-2.800h4c-.2 1.600.1 2.500 1.300 2.800 5 1.200 8.300 3.600 8.300 8.600z"/></g></svg>
<div class="t" id="p4" style="left:1906.500px;top:444px;font-size:22px;color:#444446;letter-spacing:0.8px">Blurred</div>
<!-- hidden -->
<div class="abs" style="left:2027px;top:376px;width:133px;height:112px;border-radius:11px;background:#e0e0e0;border:2px solid #c9c9c9"></div>
<svg class="abs" style="left:2080px;top:407px" width="28" height="24" viewBox="0 0 28 24"><g fill="#0d0d10"><ellipse cx="14" cy="7.500" rx="5.200" ry="6.200"/><path d="M2 24c0-5.400 3.500-7.800 8.500-9 1.200-.3 1.500-1.200 1.300-2.800h4.400c-.2 1.600.1 2.500 1.300 2.800 5 1.200 8.500 3.600 8.500 9z"/></g></svg>
<div class="t" id="p5" style="left:2056px;top:444px;font-size:22px;color:#0b0b0e;letter-spacing:1px">Hidden</div>
<div class="hr" style="left:1730px;top:504px;width:430px"></div>
<!-- shape -->
<div class="t" id="p6" style="left:1730px;top:526px;font-size:24px;color:#38383a;letter-spacing:0.6px;-webkit-text-stroke:0.35px #38383a">Shape</div>
<div class="t" id="p7" style="left:2004px;top:527px;font-size:22px;color:#444446;letter-spacing:0.75px">Fullscreen</div>
<svg class="abs" style="left:2130px;top:525px" width="28" height="28" viewBox="0 0 28 28"><g fill="none" stroke="#2d2d2f" stroke-width="1.900" stroke-linecap="round" stroke-linejoin="round"><path d="M3 3l9.200 9.200M3 9.600V3h6.600"/><path d="M25 24.600l-9.200-9.200M25 18v6.600h-6.600"/></g></svg>
<div class="abs" style="left:1730px;top:570px;width:430px;height:52px;border-radius:13px;border:2px solid #e6e6e6;background:#fff;overflow:hidden"><div style="position:absolute;left:0;top:0;width:141px;height:48px;background:#ebebeb"></div></div>
<div class="abs" style="left:1780px;top:580px;width:44px;height:32px;border:3px solid #0b0b0e;border-radius:2px"></div>
<svg class="abs" style="left:1924px;top:575px" width="42" height="42" viewBox="0 0 42 42"><circle cx="21" cy="21" r="17" fill="none" stroke="#444446" stroke-width="2.400"/></svg>
<svg class="abs" style="left:2067px;top:575px" width="42" height="42" viewBox="0 0 42 42"><path d="M21 3.800l14.700 8.500v17l-14.700 8.500-14.700-8.500v-17z" fill="none" stroke="#444446" stroke-width="2.400" stroke-linejoin="round"/></svg>
<div class="hr" style="left:1730px;top:638px;width:430px"></div>
<!-- swatches -->
<div class="abs" style="left:1730px;top:656px;width:52px;height:52px;border-radius:13px;border:3px solid #a79af8;background:#fff"></div>
<div class="abs" style="left:1736px;top:662px;width:40px;height:40px;border-radius:8px;background:#dedede"></div>
<svg class="abs" style="left:1740px;top:666px" width="32" height="32" viewBox="0 0 32 32"><circle cx="16" cy="16" r="12.800" fill="none" stroke="#444446" stroke-width="2.600"/><path d="M25 7L7 25" stroke="#444446" stroke-width="2.600"/></svg>
<div class="abs" style="left:1790px;top:662px;width:40px;height:40px;border-radius:8px;background:linear-gradient(180deg,#d6cff0 0%,#eeb0c0 45%,#f4606a 100%)"></div>
<div class="abs" style="left:1844px;top:662px;width:40px;height:40px;border-radius:8px;background:linear-gradient(180deg,#cdf24e 0%,#7fc184 45%,#0b6cb4 100%)"></div>
<div class="abs" style="left:1897px;top:662px;width:40px;height:40px;border-radius:8px;background:radial-gradient(circle at 50% 50%,#a5f7dd 0%,#7fb5f7 45%,#5b80f0 100%)"></div>
<div class="abs" style="left:1951px;top:662px;width:40px;height:40px;border-radius:8px;background:linear-gradient(180deg,#6a12c0 0%,#b567c6 50%,#f2a9ba 100%)"></div>
<div class="abs" style="left:2005px;top:662px;width:40px;height:40px;border-radius:8px;background:linear-gradient(180deg,#eaa9b0 0%,#86607e 45%,#10103f 100%)"></div>
<div class="abs" style="left:2059px;top:662px;width:40px;height:40px;border-radius:8px;background:#000"></div>
<div class="abs" style="left:2112px;top:662px;width:40px;height:40px;border-radius:8px;background:#fff;border:2px solid #e6e6e6"></div>
<svg class="abs" style="left:2117px;top:667px" width="30" height="30" viewBox="0 0 30 30"><g fill="#fff" stroke="#e2e2e2" stroke-width="1.800" stroke-linejoin="round" stroke-linecap="round"><path d="M17.600 9.200l3.200 3.200-11.400 11.400c-1 .9-2.400 1.400-3.800 1.400l-1.600 1-.8-.8 1-1.600c0-1.400.5-2.800 1.400-3.800z"/><path d="M16 8.400l5.600 5.600 1.400-1.400-1-1 2.600-2.600c1.300-1.300 1.300-3.300 0-4.600s-3.300-1.300-4.600 0l-2.600 2.600-1-1z"/></g></svg>
<div class="hr" style="left:1730px;top:724px;width:430px"></div>
<div class="t" id="p8" style="left:1731px;top:754px;font-size:24px;color:#4a3ad4;letter-spacing:0.8px">Additional settings</div>
<svg class="abs" style="left:1957px;top:758px" width="24" height="16" viewBox="0 0 24 16"><path d="M3 3l9 9.400 9-9.400" fill="none" stroke="#8e84f2" stroke-width="2" stroke-linecap="round" stroke-linejoin="round"/></svg>
<div class="hr" style="left:1706px;top:838px;width:478px"></div>
<!-- virtual background -->
<div class="t" id="p9" style="left:1731px;top:868px;font-size:24px;font-weight:bold;color:#0b0b0e;letter-spacing:0.7px">Virtual background</div>
<div class="abs" style="left:1730px;top:920px;width:141px;height:85px;border-radius:15px;border:4px solid #4b38d3;background:#fff"></div>
<!--THUMBS-->
<!-- thumb: dark grid -->
<svg class="abs" style="left:1883px;top:928px" width="124" height="70" viewBox="0 0 124 70"><defs><clipPath id="t2c"><rect width="124" height="70" rx="8"/></clipPath><linearGradient id="t2g" x1="0" y1="0" x2="0" y2="1"><stop offset="0" stop-color="#224a6c"/><stop offset="0.3" stop-color="#1b4162"/><stop offset="0.6" stop-color="#0d2c47"/><stop offset="0.82" stop-color="#041828"/><stop offset="1" stop-color="#020e1c"/></linearGradient><radialGradient id="t2v" cx="0.5" cy="0.35" r="0.75"><stop offset="0.55" stop-color="#000" stop-opacity="0"/><stop offset="1" stop-color="#00060f" stop-opacity="0.55"/></radialGradient><linearGradient id="t2f" x1="0" y1="0" x2="0" y2="1"><stop offset="0" stop-color="#fff" stop-opacity="0"/><stop offset="0.35" stop-color="#fff" stop-opacity="1"/><stop offset="0.75" stop-color="#fff" stop-opacity="0.5"/><stop offset="1" stop-color="#fff" stop-opacity="0"/></linearGradient><mask id="t2m"><rect x="0" y="36" width="124" height="34" fill="url(#t2f)"/></mask></defs><g clip-path="url(#t2c)"><rect width="124" height="70" fill="url(#t2g)"/><g mask="url(#t2m)" stroke="#9fb0bd" stroke-width="0.45" opacity="0.34" fill="none"><path d="M0 41h124M0 44h124M0 47.500h124M0 51.500h124M0 56.500h124M0 63h124"/><path d="M62 38L62 70M56 38L48 70M50 38L34 70M44 38L20 70M38 38L6 70M32 38L-8 70M26 38L-22 70M20 38L-36 70M68 38L76 70M74 38L90 70M80 38L104 70M86 38L118 70M92 38L132 70M98 38L146 70M104 38L160 70"/></g><rect width="124" height="70" fill="url(#t2v)"/></g></svg>
<!-- thumb: gray wall -->
<svg class="abs" style="left:2027px;top:928px" width="125" height="70" viewBox="0 0 125 70"><defs><clipPath id="t3c"><rect width="125" height="70" rx="8"/></clipPath><linearGradient id="t3g" x1="0" y1="0.300" x2="1" y2="0"><stop offset="0" stop-color="#ececec"/><stop offset="0.45" stop-color="#dfdfdf"/><stop offset="0.8" stop-color="#cbcbcb"/><stop offset="1" stop-color="#b9b9b9"/></linearGradient><filter id="t3b"><feGaussianBlur stdDeviation="1.600"/></filter></defs><g clip-path="url(#t3c)"><rect width="125" height="70" fill="url(#t3g)"/><rect x="16" y="0" width="5.500" height="70" fill="#f3f3f3" opacity="0.9"/><g filter="url(#t3b)"><path d="M14 19L125 62" stroke="#b9b9b9" stroke-width="2.400" opacity="0.75"/><path d="M30 8L125 44" stroke="#c2c2c2" stroke-width="2" opacity="0.7"/><g fill="#b4b4b4" opacity="0.5"><ellipse cx="36" cy="5" rx="6" ry="3.500"/><ellipse cx="46" cy="9" rx="5" ry="4"/><ellipse cx="54" cy="15" rx="6" ry="4"/><ellipse cx="62" cy="19" rx="4.500" ry="3.500"/><ellipse cx="70" cy="24" rx="6" ry="4.500"/><ellipse cx="80" cy="30" rx="5" ry="4"/><ellipse cx="88" cy="34" rx="5.500" ry="4"/><ellipse cx="98" cy="40" rx="5" ry="3.500"/><ellipse cx="58" cy="8" rx="4" ry="3"/><ellipse cx="76" cy="18" rx="4" ry="3"/></g><path d="M20 60L125 96" stroke="#cfcfcf" stroke-width="2" opacity="0.6"/></g><rect x="103" y="40" width="22" height="30" fill="#c6c6c6" opacity="0.35"/><rect x="0.750" y="0.750" width="123.500" height="68.500" rx="7.500" fill="none" stroke="#bfbfbf" stroke-width="1.500" opacity="0.9"/></g></svg>
<!-- thumb: teal with block -->
<svg class="abs" style="left:1738px;top:1033px" width="125" height="70" viewBox="0 0 125 70"><defs><clipPath id="t4c"><rect width="125" height="70" rx="8"/></clipPath><linearGradient id="t4g" gradientUnits="userSpaceOnUse" x1="4" y1="4" x2="122" y2="58"><stop offset="0" stop-color="#baf7d4"/><stop offset="0.28" stop-color="#a3ecd8"/><stop offset="0.5" stop-color="#78c6c2"/><stop offset="0.75" stop-color="#4c96a4"/><stop offset="1" stop-color="#2f687f"/></linearGradient></defs><g clip-path="url(#t4c)"><rect width="125" height="70" fill="url(#t4g)"/><path d="M43 43l20 12.500V71H43z" fill="#ecc48d"/><path d="M63 55.500L82 43v28H63z" fill="#c98c74"/><path d="M43 43l19.500-10L82 43 63 55.500z" fill="#d9a27c"/><path d="M47.500 28l15-9 15 9v17l-15 10-15-10z" fill="#8fb0cf"/><path d="M47.500 28l15-9 15 9-15 8.500z" fill="#6fd4d6"/><path d="M47.500 28v17l15 10V36.500z" fill="#a9b7c9"/><path d="M62.500 36.500V55l15-10V28z" fill="#6f86b3"/><path d="M57 45h10v9c0 2-2 3.600-5 3.600s-5-1.600-5-3.600z" fill="#7f8a8a"/><rect x="48.500" y="30" width="2" height="9" fill="#fff" opacity="0.9"/><rect x="74" y="32" width="1.800" height="8" fill="#fff" opacity="0.8"/><path d="M56 27.500l14 8-14 8z" fill="#fff"/><rect x="0.500" y="0.500" width="124" height="69" rx="7.500" fill="none" stroke="#5aa2a0" stroke-width="1" opacity="0.5"/></g></svg>
<!-- thumb: slate -->
<div class="abs" style="left:1883px;top:1033px;width:124px;height:70px;border-radius:8px;background:#5e758d;box-shadow:inset 0 0 0 1px rgba(60,80,100,0.35)"></div>
<!-- thumb: see all -->
<svg class="abs" style="left:2027px;top:1033px" width="125" height="70" viewBox="0 0 125 70"><defs><clipPath id="t6c"><rect width="125" height="70" rx="8"/></clipPath><linearGradient id="t6a" x1="0" y1="0" x2="0" y2="1"><stop offset="0" stop-color="#d9c2d0"/><stop offset="0.6" stop-color="#ecd6dc"/><stop offset="1" stop-color="#d9c4cf"/></linearGradient><linearGradient id="t6b" x1="0" y1="0" x2="1" y2="1"><stop offset="0" stop-color="#eab4bd"/><stop offset="0.45" stop-color="#d9b9e2"/><stop offset="0.8" stop-color="#c6c3ec"/><stop offset="1" stop-color="#b7d6f1"/></linearGradient><pattern id="t6p" width="15" height="9" patternUnits="userSpaceOnUse"><rect width="15" height="9" fill="#a9a9a9"/><circle cx="7.500" cy="9" r="7" fill="#b5b5b5" stroke="#9f9c94" stroke-width="0.700"/></pattern><pattern id="t6q" width="15" height="9" patternUnits="userSpaceOnUse" patternTransform="translate(7.500 4.500)"><circle cx="7.500" cy="9" r="7" fill="#b1b1b1" stroke="#9f9c94" stroke-width="0.700"/></pattern></defs><g clip-path="url(#t6c)"><rect width="62" height="35" fill="url(#t6p)"/><rect width="62" height="35" fill="url(#t6q)" opacity="0.8"/><rect x="62" y="0" width="63" height="35" fill="url(#t6a)"/><path d="M92 35l1.600-20 .6-15h.6l.6 15 1.600 20z" fill="#b9a7b8" opacity="0.85"/><rect x="62" y="30" width="63" height="5" fill="#b9aebc" opacity="0.55"/><rect x="0" y="35" width="62" height="35" fill="#d2b58f"/><ellipse cx="20" cy="47" rx="18" ry="9" fill="#e0a274" opacity="0.8"/><ellipse cx="47" cy="52" rx="14" ry="8" fill="#d3c08c" opacity="0.8"/><rect x="0" y="61" width="62" height="9" fill="#c5c2a0" opacity="0.8"/><path d="M44 70c1-10 0-18-4-27" stroke="#a89a86" stroke-width="2" fill="none" opacity="0.7"/><rect x="62" y="35" width="63" height="35" fill="url(#t6b)"/></g></svg>
<div class="t" id="p12" style="left:2051px;top:1055px;font-size:24px;color:#0b0b0e;letter-spacing:0.5px;-webkit-text-stroke:0.6px #0b0b0e">See all</div>

<!--/THUMBS-->
<div class="hr" style="left:1706px;top:1134px;width:478px"></div>
<div class="abs" style="left:1730px;top:1168px;width:32px;height:32px;border-radius:8px;border:2px solid #e2e2e2;background:#fff"></div>
<div class="t" id="p10" style="left:1778px;top:1172px;font-size:22px;color:#444446;letter-spacing:0.7px">Pointer</div>
<div class="abs" style="left:1730px;top:1216px;width:32px;height:32px;border-radius:8px;border:2px solid #e2e2e2;background:#fff"></div>
<div class="t" id="p11" style="left:1778px;top:1220px;font-size:22px;color:#444446;letter-spacing:0.7px">Show logo</div>
<div class="hr" style="left:1706px;top:1280px;width:478px"></div>

<!--/PANEL-->
<!--TRAY-->
<div class="abs" style="left:136px;top:1192px;width:162px;height:101px;border-radius:18px;border:4px solid #4b38d3;background:#fff"></div>
<svg class="abs" style="left:156px;top:1214px" width="70" height="70" viewBox="0 0 70 70"><defs><linearGradient id="pg" x1="0" y1="0" x2="0" y2="1"><stop offset="0" stop-color="#666"/><stop offset="1" stop-color="#3c3c3c"/></linearGradient></defs><path d="M35 5c-6.800 0-11.400 5.400-11.400 13.400 0 5.600 1.600 10.200 4.400 13.400 1.400 1.600 1.200 4.400-.6 5.800-1.600 1.200-4.200 2.400-8.600 4.400-9.400 4.200-15 9.600-15 22.600 0 1.900 1.200 3 3 3h57.200c1.800 0 3-1.100 3-3 0-13-5.600-18.400-15-22.600-4.400-2-7-3.200-8.600-4.400-1.800-1.400-2-4.200-.6-5.800 2.800-3.200 4.600-7.800 4.600-13.400 0-8.200-4.800-13.800-12-13.800z" fill="url(#pg)" stroke="#989898" stroke-width="2.400"/></svg>
<div class="abs" style="left:236px;top:1231px;width:48px;height:48px;border-radius:12px;background:#333335"></div>
<svg class="abs" style="left:248px;top:1251px" width="24" height="8" viewBox="0 0 24 8"><circle cx="4" cy="4" r="2.100" fill="#fff"/><circle cx="12" cy="4" r="2.100" fill="#fff"/><circle cx="20" cy="4" r="2.100" fill="#fff"/></svg>

<!--/TRAY-->
<!--BOTTOM-->
<div class="abs" style="left:128px;top:1349px;width:179px;height:64px;border-radius:12px;background:#f4f4f4"></div>
<svg class="abs" style="left:148px;top:1369px" width="24" height="24" viewBox="0 0 24 24"><path d="M12 1.800v20.400M1.800 12h20.400" stroke="#0b0b0e" stroke-width="2" stroke-linecap="round"/></svg>
<div class="t" id="b1" style="left:185px;top:1370px;font-size:24px;color:#0b0b0e;letter-spacing:0.35px">Add Slide</div>
<div class="abs" style="left:323px;top:1349px;width:238px;height:64px;border-radius:12px;background:#f4f4f4"></div>
<svg class="abs" style="left:343px;top:1370px" width="24" height="23" viewBox="0 0 24 23"><rect x="1" y="1" width="22" height="21" rx="1.600" fill="#f4f4f4" stroke="#0b0b0e" stroke-width="1.800"/><rect x="1" y="1" width="22" height="5.400" fill="#0b0b0e"/><path d="M5 9.800h14M5 13.600h14M5 17.400h9" stroke="#0b0b0e" stroke-width="1.700"/></svg>
<div class="t" id="b2" style="left:380px;top:1370px;font-size:24px;color:#0b0b0e;letter-spacing:0.6px">Speaker Notes</div>
<svg class="abs" style="left:603px;top:1367px" width="28" height="28" viewBox="0 0 28 28"><path d="M10.200 2.200L2.600 8.600l7.600 6.400M3.200 8.600h13.600c4.600 0 8 3.400 8 7.800s-3.400 7.800-8 7.800H8.400" fill="none" stroke="#0b0b0e" stroke-width="2.100" stroke-linecap="round" stroke-linejoin="round"/></svg>
<svg class="abs" style="left:675px;top:1367px" width="28" height="28" viewBox="0 0 28 28"><path d="M17.800 2.200l7.600 6.400-7.600 6.400M24.800 8.600H11.200c-4.600 0-8 3.400-8 7.800s3.400 7.800 8 7.800h8.400" fill="none" stroke="#bdbdbd" stroke-width="2.100" stroke-linecap="round" stroke-linejoin="round"/></svg>
<!-- record -->
<div class="abs" style="left:1025px;top:1349px;width:180px;height:64px;border-radius:12px 0 0 12px;background:#f4f4f4"></div>
<div class="abs" style="left:1207px;top:1349px;width:64px;height:64px;border-radius:0 12px 12px 0;background:#f4f4f4"></div>
<svg class="abs" style="left:1051px;top:1365px" width="32" height="32" viewBox="0 0 32 32"><circle cx="16" cy="16" r="13.800" fill="none" stroke="#ff6a5c" stroke-width="2.100"/><circle cx="16" cy="16" r="5.900" fill="#ff6a5c"/></svg>
<div class="t" id="b3" style="left:1095px;top:1370px;font-size:24px;color:#0b0b0e;letter-spacing:0.45px">Record</div>
<svg class="abs" style="left:1227px;top:1375px" width="24" height="15" viewBox="0 0 24 15"><path d="M2.400 3l9.600 9.200 9.600-9.200" fill="none" stroke="#444446" stroke-width="2" stroke-linecap="round" stroke-linejoin="round"/></svg>
<!-- mic -->
<div class="abs" style="left:1856px;top:1349px;width:84px;height:64px;border-radius:12px 0 0 12px;background:#f4f4f4"></div>
<div class="abs" style="left:1942px;top:1349px;width:64px;height:64px;border-radius:0 12px 12px 0;background:#f4f4f4"></div>
<svg class="abs" style="left:1870px;top:1359px" width="8" height="44" viewBox="0 0 8 44"><g fill="#e0e0e0"><circle cx="4" cy="3.600" r="2"/><circle cx="4" cy="9.700" r="2"/><circle cx="4" cy="15.800" r="2"/><circle cx="4" cy="21.900" r="2"/><circle cx="4" cy="28" r="2"/><circle cx="4" cy="34.100" r="2"/></g><circle cx="4" cy="40.200" r="2" fill="#35c759"/></svg>
<svg class="abs" style="left:1886px;top:1360px" width="28" height="42" viewBox="0 0 28 42"><rect x="7.200" y="1.800" width="13.600" height="27" rx="6.800" fill="#0b0b0e"/><path d="M2.600 18.800v3c0 6.400 5 11.200 11.400 11.200s11.400-4.800 11.400-11.200v-3" fill="none" stroke="#0b0b0e" stroke-width="2.100" stroke-linecap="round"/><path d="M14 33v6.800M6.400 40h15.200" stroke="#0b0b0e" stroke-width="2.100" stroke-linecap="round"/></svg>
<svg class="abs" style="left:1962px;top:1375px" width="24" height="15" viewBox="0 0 24 15"><path d="M2.400 3l9.600 9.200 9.600-9.200" fill="none" stroke="#444446" stroke-width="2" stroke-linecap="round" stroke-linejoin="round"/></svg>
<!-- cam -->
<div class="abs" style="left:2022px;top:1349px;width:80px;height:64px;border-radius:12px 0 0 12px;background:#f4f4f4"></div>
<div class="abs" style="left:2104px;top:1349px;width:64px;height:64px;border-radius:0 12px 12px 0;background:#f4f4f4"></div>
<svg class="abs" style="left:2040px;top:1366px" width="44" height="30" viewBox="0 0 44 30"><rect x="1.600" y="1" width="30.400" height="28" rx="4.600" fill="#0b0b0e"/><path d="M35 9.600l5.400-4.400c.9-.7 1.900-.2 1.900.9v17.800c0 1.100-1 1.600-1.900.9L35 20.400z" fill="#0b0b0e"/></svg>
<svg class="abs" style="left:2124px;top:1375px" width="24" height="15" viewBox="0 0 24 15"><path d="M2.400 3l9.600 9.200 9.600-9.200" fill="none" stroke="#444446" stroke-width="2" stroke-linecap="round" stroke-linejoin="round"/></svg>

<!--/BOTTOM-->
</div></div>
</body></html>
